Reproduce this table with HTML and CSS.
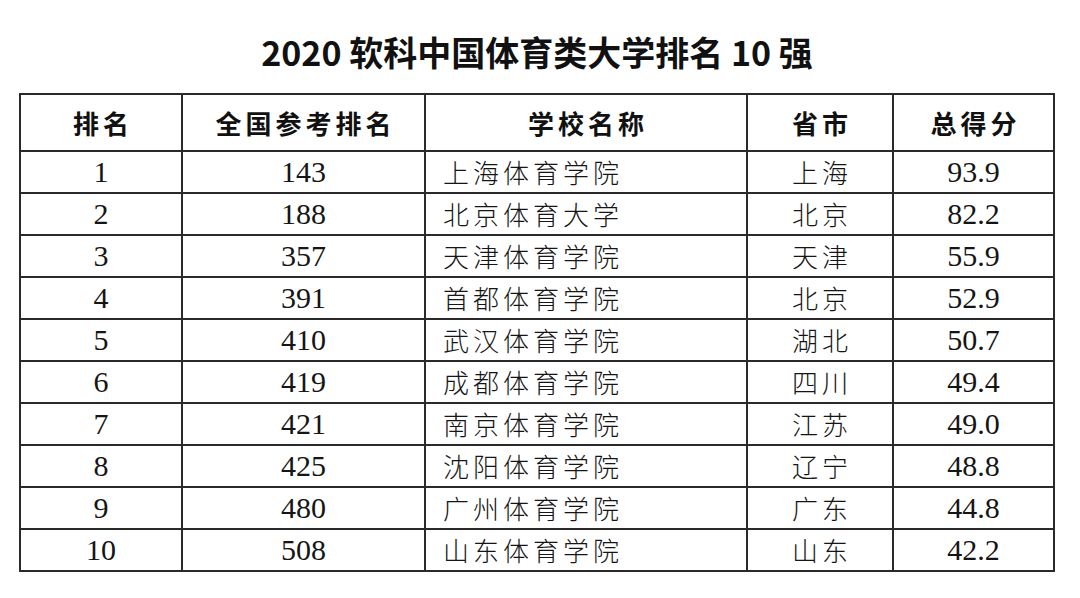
FILE: index.html
```html
<!DOCTYPE html>
<html lang="zh-CN">
<head>
<meta charset="utf-8">
<title>2020 软科中国体育类大学排名 10 强</title>
<link rel="stylesheet" href="styles.css">
</head>
<body>
<div class="page">
  <h1 class="title">2020 软科中国体育类大学排名 10 强</h1>
  <table class="rank-table">
    <thead>
      <tr class="head-row">
        <th class="c-rank"><span class="cj">排名</span></th>
        <th class="c-nat"><span class="cj">全国参考排名</span></th>
        <th class="c-school"><span class="cj">学校名称</span></th>
        <th class="c-prov"><span class="cj">省市</span></th>
        <th class="c-score"><span class="cj">总得分</span></th>
      </tr>
    </thead>
    <tbody>
      <tr><td class="num">1</td><td class="num">143</td><td class="school">上海体育学院</td><td class="prov"><span class="cj">上海</span></td><td class="num">93.9</td></tr>
      <tr><td class="num">2</td><td class="num">188</td><td class="school">北京体育大学</td><td class="prov"><span class="cj">北京</span></td><td class="num">82.2</td></tr>
      <tr><td class="num">3</td><td class="num">357</td><td class="school">天津体育学院</td><td class="prov"><span class="cj">天津</span></td><td class="num">55.9</td></tr>
      <tr><td class="num">4</td><td class="num">391</td><td class="school">首都体育学院</td><td class="prov"><span class="cj">北京</span></td><td class="num">52.9</td></tr>
      <tr><td class="num">5</td><td class="num">410</td><td class="school">武汉体育学院</td><td class="prov"><span class="cj">湖北</span></td><td class="num">50.7</td></tr>
      <tr><td class="num">6</td><td class="num">419</td><td class="school">成都体育学院</td><td class="prov"><span class="cj">四川</span></td><td class="num">49.4</td></tr>
      <tr><td class="num">7</td><td class="num">421</td><td class="school">南京体育学院</td><td class="prov"><span class="cj">江苏</span></td><td class="num">49.0</td></tr>
      <tr><td class="num">8</td><td class="num">425</td><td class="school">沈阳体育学院</td><td class="prov"><span class="cj">辽宁</span></td><td class="num">48.8</td></tr>
      <tr><td class="num">9</td><td class="num">480</td><td class="school">广州体育学院</td><td class="prov"><span class="cj">广东</span></td><td class="num">44.8</td></tr>
      <tr><td class="num">10</td><td class="num">508</td><td class="school">山东体育学院</td><td class="prov"><span class="cj">山东</span></td><td class="num">42.2</td></tr>
    </tbody>
  </table>
</div>
</body>
</html>
```

FILE: styles.css
```css
html, body {
  margin: 0;
  padding: 0;
  background: #ffffff;
}

.page {
  width: 1080px;
  height: 598px;
  padding-top: 32px;
  box-sizing: border-box;
  color: #141414;
}

.title {
  margin: 0 0 21px 19px;
  width: 1036px;
  height: 40px;
  line-height: 40px;
  text-align: center;
  font-family: "Noto Sans CJK SC", "Liberation Sans", sans-serif;
  font-weight: 700;
  font-size: 34px;
  letter-spacing: 0;
  color: #111;
}

.rank-table {
  margin-left: 19px;
  width: 1036px;
  table-layout: fixed;
  border-collapse: separate;
  border-spacing: 0;
  border-top: 2px solid #2a2a2a;
  border-left: 2px solid #2a2a2a;
}

.rank-table th,
.rank-table td {
  box-sizing: border-box;
  padding: 0;
  border-right: 2px solid #2a2a2a;
  border-bottom: 2px solid #2a2a2a;
  text-align: center;
  vertical-align: middle;
  white-space: nowrap;
}

.c-rank { width: 162px; }
.c-nat { width: 243px; }
.c-school { width: 322px; }
.c-prov { width: 146px; }
.c-score { width: 161px; }

.head-row { height: 57px; }
.rank-table tbody tr { height: 42px; }

.rank-table th {
  font-family: "Noto Sans CJK SC", sans-serif;
  font-weight: 700;
  font-size: 26px;
  line-height: 30px;
  letter-spacing: 4px;
  color: #111;
}

.cj {
  margin-right: -4px;
}

.num {
  font-family: "Liberation Serif", serif;
  font-size: 30px;
  line-height: 32px;
  color: #151515;
}

.school {
  text-align: left !important;
  padding-left: 17px !important;
  font-family: "Noto Sans CJK SC", sans-serif;
  font-weight: 300;
  font-size: 26px;
  line-height: 30px;
  letter-spacing: 4px;
  color: #151515;
}

.prov {
  font-family: "Noto Sans CJK SC", sans-serif;
  font-weight: 300;
  font-size: 26px;
  line-height: 30px;
  letter-spacing: 4px;
  color: #151515;
}
```
